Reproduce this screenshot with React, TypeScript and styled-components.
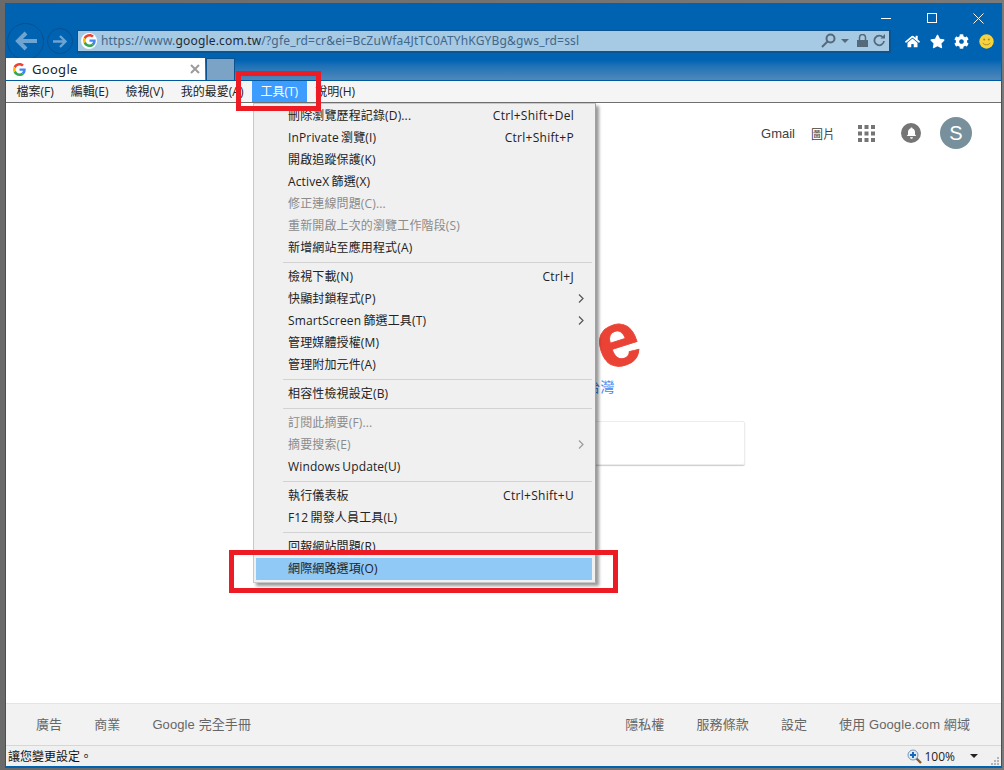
import React from "react";
import styled, { createGlobalStyle } from "styled-components";
import { FaHome, FaStar, FaCog } from "react-icons/fa";

const Global = createGlobalStyle`
  html, body { margin: 0; padding: 0; background: #6d6d6d; }
  body { font-family: "Open Sans", "Noto Sans CJK TC", sans-serif; }
  * { box-sizing: border-box; }
`;

const Screen = styled.div`
  width: 1004px;
  height: 770px;
  padding: 3px 2px 2px 5px;
  background: linear-gradient(90deg, #6a6a6a, #7a7a7a);
  overflow: hidden;
`;

const Window = styled.div`
  position: relative;
  width: 997px;
  height: 765px;
  border: 1px solid #0063b1;
  border-bottom-width: 2px;
  display: flex;
  flex-direction: column;
  background: #fff;
`;

const Chrome = styled.div`
  height: 77px;
  flex: none;
  display: flex;
  flex-direction: column;
  background: linear-gradient(180deg, #0063b1 0, #0063b1 56px, #1f72b6 62px, #4f88ba 76px);
  border-bottom: 1px solid #00599f;
`;

const Controls = styled.div`
  height: 19px;
  flex: none;
  display: flex;
  justify-content: flex-end;
  gap: 35px;
  padding: 9px 17px 0 0;
  color: #fff;
`;

const ControlIcon = styled.svg`
  width: 11px;
  height: 11px;
  display: block;
  stroke: #fff;
  stroke-width: 1;
  fill: none;
`;

const NavRow = styled.div`
  height: 36px;
  flex: none;
  display: flex;
  align-items: center;
  padding-left: 1px;
`;

const RoundButton = styled.div<{ $size: number; $mr: number }>`
  width: ${(p) => p.$size}px;
  height: ${(p) => p.$size}px;
  margin-right: ${(p) => p.$mr}px;
  flex: none;
  border-radius: 50%;
  border: 1px solid #0b4f8e;
  display: flex;
  align-items: center;
  justify-content: center;
`;

const AddressBar = styled.div`
  width: 814px;
  height: 23px;
  flex: none;
  display: flex;
  align-items: center;
  background: #a6cae4;
  border: 1px solid #0c5490;
  border-width: 1px 2px 2px 1px;
  padding: 0 4px 0 3px;
`;

const Favicon = styled.svg<{ $size: number }>`
  width: ${(p) => p.$size}px;
  height: ${(p) => p.$size}px;
  flex: none;
  display: block;
`;

const FaviconDisc = styled.span`
  width: 16px;
  height: 16px;
  border-radius: 50%;
  background: #fff;
  display: flex;
  align-items: center;
  justify-content: center;
  flex: none;
`;

const Url = styled.div`
  margin-left: 4px;
  flex: 1;
  font-family: "Noto Sans", sans-serif;
  font-size: 12px;
  white-space: nowrap;
  color: #41678a;
  letter-spacing: 0.175px;
`;

const UrlHost = styled.span`
  color: #1d2a36;
`;

const AddressIcons = styled.div`
  display: flex;
  align-items: center;
  gap: 5px;
  flex: none;
`;

const Actions = styled.div`
  display: flex;
  align-items: center;
  gap: 9.5px;
  margin-left: 14px;
  color: #fff;
  font-size: 15px;
`;

const TabRow = styled.div`
  flex: 1;
  display: flex;
  align-items: stretch;
  gap: 1px;
  margin-top: -1px;
`;

const Tab = styled.div`
  width: 199px;
  display: flex;
  align-items: center;
  padding: 0 5px 0 7px;
  background: #fff;
  font-size: 13px;
  font-family: "Noto Sans", sans-serif;
  color: #222;
  letter-spacing: 0.3px;
`;

const TabTitle = styled.span`
  margin-left: 6px;
  flex: 1;
`;

const TabClose = styled.svg`
  width: 10px;
  height: 10px;
  stroke: #9b9b9b;
  stroke-width: 2;
`;

const TabStub = styled.div`
  width: 29px;
  background: #7ba3c6;
  border: 1px solid #0d5390;
  border-bottom: none;
`;

const MenuBar = styled.div`
  height: 22px;
  flex: none;
  display: flex;
  align-items: center;
  padding-left: 2px;
  background: #f5f5f5;
  border-bottom: 1px solid #6f6f6f;
  font-size: 12px;
  color: #222;
`;

const MenuLabel = styled.div<{ $active?: boolean }>`
  height: 21px;
  display: flex;
  align-items: center;
  padding: 0 8.5px 1px;
  white-space: nowrap;
  background: ${(p) => (p.$active ? "#3d9cff" : "transparent")};
  color: ${(p) => (p.$active ? "#fff" : "#222")};
`;

const Page = styled.div`
  flex: 1;
  min-height: 0;
  display: flex;
  flex-direction: column;
  background: #fff;
`;

const TopLinks = styled.div`
  height: 60px;
  flex: none;
  display: flex;
  align-items: center;
  justify-content: flex-end;
  padding-right: 29px;
  color: #404040;
  font-size: 13px;
  font-family: "Liberation Sans", "Noto Sans CJK TC", sans-serif;
`;

const TopLink = styled.span<{ $mr: number; $size: number }>`
  margin-right: ${(p) => p.$mr}px;
  font-size: ${(p) => p.$size}px;
`;

const GridIcon = styled.svg`
  width: 17px;
  height: 17px;
  margin-right: 26px;
  fill: #757575;
`;

const Bell = styled.div`
  width: 20px;
  height: 20px;
  border-radius: 50%;
  margin-right: 19px;
  background: #757575;
  display: flex;
  align-items: center;
  justify-content: center;
`;

const Avatar = styled.div`
  width: 32px;
  height: 32px;
  border-radius: 50%;
  background: #78909c;
  color: #fff;
  font-size: 20px;
  display: flex;
  align-items: center;
  justify-content: center;
`;

const Center = styled.div`
  flex: 1;
  display: flex;
  flex-direction: column;
  align-items: center;
`;

const Brand = styled.div`
  margin-top: 139px;
  width: 282px;
  display: flex;
  flex-direction: column;
  align-items: flex-end;
`;

const Logo = styled.div`
  align-self: center;
  font-family: "Liberation Sans", sans-serif;
  font-weight: 700;
  font-size: 77px;
  line-height: 74px;
  white-space: nowrap;
  margin-left: 4px;
  -webkit-text-stroke: 0.8px currentColor;
`;

const LogoLetter = styled.span<{ $color: string; $tilt?: boolean }>`
  color: ${(p) => p.$color};
  display: inline-block;
  ${(p) => (p.$tilt ? "transform: rotate(-18deg);" : "")}
`;

const Region = styled.div`
  margin-right: 30px;
  font-size: 14px;
  line-height: 20px;
  color: #4285f4;
  font-family: "Noto Sans CJK TC", sans-serif;
`;

const SearchBox = styled.div`
  margin-top: 25px;
  width: 482px;
  height: 44px;
  border: 1px solid #ececec;
  border-radius: 2px;
  box-shadow: 0 1px 1px rgba(0, 0, 0, 0.2);
`;

const Footer = styled.div`
  height: 43px;
  flex: none;
  display: flex;
  align-items: center;
  justify-content: space-between;
  padding: 0 31px 2px 30px;
  background: #f2f2f2;
  border-top: 1px solid #e4e4e4;
  border-bottom: 1px solid #d6d6d6;
  color: #666;
  font-size: 13px;
  letter-spacing: 0.1px;
  font-family: "Liberation Sans", "Noto Sans CJK TC", sans-serif;
`;

const FooterGroup = styled.div`
  display: flex;
  gap: 32px;
`;

const StatusBar = styled.div`
  height: 20px;
  flex: none;
  display: flex;
  align-items: center;
  padding-left: 2px;
  background: #f0f0f0;
  color: #111;
  font-size: 12px;
`;

const StatusText = styled.span`
  flex: 1;
`;

const ZoomGroup = styled.div`
  display: flex;
  align-items: center;
  gap: 2px;
  color: #222;
`;

const Caret = styled.span`
  width: 0;
  height: 0;
  margin: 0 12px 0 15px;
  border-left: 4px solid transparent;
  border-right: 4px solid transparent;
  border-top: 4px solid #222;
`;

const Grip = styled.svg`
  width: 10px;
  height: 10px;
  margin: 8px 1px 0 0;
  fill: #b4b4b4;
  align-self: flex-end;
`;

const Dropdown = styled.div`
  position: absolute;
  left: 247px;
  top: 99px;
  width: 343px;
  padding: 1px 0 2px;
  background: #f0f0f0;
  border: 1px solid #c8c8c8;
  border-right-color: #a0a0a0;
  box-shadow: 3px 3px 3px rgba(0, 0, 0, 0.4);
  font-size: 12px;
  letter-spacing: 0.14px;
  word-spacing: -1px;
  color: #222;
  z-index: 2;
`;

const Item = styled.div<{ $disabled?: boolean; $selected?: boolean }>`
  height: 22px;
  display: flex;
  align-items: center;
  justify-content: space-between;
  white-space: nowrap;
  padding: 0 ${(p) => (p.$selected ? 18 : 21)}px 2px ${(p) => (p.$selected ? 32 : 34)}px;
  margin: 0 ${(p) => (p.$selected ? "3px 0 2px" : "0")};
  color: ${(p) => (p.$disabled ? "#8b8b8b" : "#222")};
  background: ${(p) => (p.$selected ? "#90c8f6" : "transparent")};
`;

const Shortcut = styled.span`
  letter-spacing: 0.28px;
`;

const Chevron = styled.svg<{ $disabled?: boolean }>`
  width: 6px;
  height: 9px;
  margin-right: -10px;
  fill: none;
  stroke: ${(p) => (p.$disabled ? "#9b9b9b" : "#555")};
  stroke-width: 1.2;
`;

const Separator = styled.div`
  height: 1px;
  margin: 3px 3px 3px 29px;
  background: #d2d2d2;
`;

const Callout = styled.div<{ $x: number; $y: number; $w: number; $h: number }>`
  position: absolute;
  left: ${(p) => p.$x}px;
  top: ${(p) => p.$y}px;
  width: ${(p) => p.$w}px;
  height: ${(p) => p.$h}px;
  border: 5px solid #ed1c24;
  z-index: 3;
`;

const GoogleG = ({ size }: { size: number }) => (
  <Favicon $size={size} viewBox="0 0 48 48">
    <path fill="#EA4335" d="M24 9.5c3.54 0 6.71 1.22 9.21 3.6l6.85-6.85C35.9 2.38 30.47 0 24 0 14.62 0 6.51 5.38 2.56 13.22l7.98 6.19C12.43 13.72 17.74 9.5 24 9.5z" />
    <path fill="#4285F4" d="M46.98 24.55c0-1.57-.15-3.09-.38-4.55H24v9.02h12.94c-.58 2.96-2.26 5.48-4.78 7.18l7.73 6c4.51-4.18 7.09-10.36 7.09-17.65z" />
    <path fill="#FBBC05" d="M10.53 28.59c-.48-1.45-.76-2.99-.76-4.59s.27-3.14.76-4.59l-7.98-6.19C.92 16.46 0 20.12 0 24c0 3.88.92 7.54 2.56 10.78l7.97-6.19z" />
    <path fill="#34A853" d="M24 48c6.48 0 11.93-2.13 15.89-5.81l-7.73-6c-2.15 1.45-4.92 2.3-8.16 2.3-6.26 0-11.57-4.22-13.47-9.91l-7.98 6.19C6.51 42.62 14.62 48 24 48z" />
  </Favicon>
);

type Entry = { label?: string; shortcut?: string; disabled?: boolean; submenu?: boolean; selected?: boolean; sep?: boolean };

const entries: Entry[] = [
  { label: "刪除瀏覽歷程記錄(D)...", shortcut: "Ctrl+Shift+Del" },
  { label: "InPrivate 瀏覽(I)", shortcut: "Ctrl+Shift+P" },
  { label: "開啟追蹤保護(K)" },
  { label: "ActiveX 篩選(X)" },
  { label: "修正連線問題(C)...", disabled: true },
  { label: "重新開啟上次的瀏覽工作階段(S)", disabled: true },
  { label: "新增網站至應用程式(A)" },
  { sep: true },
  { label: "檢視下載(N)", shortcut: "Ctrl+J" },
  { label: "快顯封鎖程式(P)", submenu: true },
  { label: "SmartScreen 篩選工具(T)", submenu: true },
  { label: "管理媒體授權(M)" },
  { label: "管理附加元件(A)" },
  { sep: true },
  { label: "相容性檢視設定(B)" },
  { sep: true },
  { label: "訂閱此摘要(F)...", disabled: true },
  { label: "摘要搜索(E)", disabled: true, submenu: true },
  { label: "Windows Update(U)" },
  { sep: true },
  { label: "執行儀表板", shortcut: "Ctrl+Shift+U" },
  { label: "F12 開發人員工具(L)" },
  { sep: true },
  { label: "回報網站問題(R)" },
  { label: "網際網路選項(O)", selected: true },
];

const menus = ["檔案(F)", "編輯(E)", "檢視(V)", "我的最愛(A)"];

export default function App() {
  return (
    <>
      <Global />
      <Screen>
        <Window>
          <Chrome>
            <Controls>
              <ControlIcon viewBox="0 0 11 11"><path d="M0 5.5h10" /></ControlIcon>
              <ControlIcon viewBox="0 0 11 11"><rect x="0.5" y="0.5" width="9" height="9" /></ControlIcon>
              <ControlIcon viewBox="0 0 11 11"><path d="M0.5 0.5l10 10M10.5 0.5l-10 10" /></ControlIcon>
            </Controls>
            <NavRow>
              <RoundButton $size={37} $mr={3}>
                <svg width="24" height="20" viewBox="0 0 24 20" fill="none" stroke="#6fa3d0" strokeWidth="4">
                  <path d="M23 10H4M12 2l-8 8 8 8" />
                </svg>
              </RoundButton>
              <RoundButton $size={26} $mr={4}>
                <svg width="15" height="13" viewBox="0 0 15 13" fill="none" stroke="#6fa3d0" strokeWidth="2.4">
                  <path d="M0 6.5h12M7 1l5.5 5.5L7 12" />
                </svg>
              </RoundButton>
              <AddressBar>
                <FaviconDisc><GoogleG size={13} /></FaviconDisc>
                <Url>
                  https://www.<UrlHost>google.com.tw</UrlHost>/?gfe_rd=cr&ei=BcZuWfa4JtTC0ATYhKGYBg&gws_rd=ssl
                </Url>
                <AddressIcons>
                  <svg width="15" height="15" viewBox="0 0 15 15" fill="none" stroke="#56697a" strokeWidth="2">
                    <circle cx="9.5" cy="5.5" r="4" />
                    <path d="M6.5 8.5L1 14" />
                  </svg>
                  <svg width="8" height="4" viewBox="0 0 8 4" fill="#56697a"><path d="M0 0h8L4 4z" /></svg>
                  <svg width="11" height="13" viewBox="0 0 11 13" fill="#56697a" style={{ marginLeft: 3 }}>
                    <path d="M0 6h11v7H0z" />
                    <path d="M2.5 6V3.5a3 3 0 0 1 6 0V6" fill="none" stroke="#56697a" strokeWidth="1.5" />
                  </svg>
                  <svg width="12" height="13" viewBox="0 0 12 13" fill="none" stroke="#56697a" strokeWidth="1.8">
                    <path d="M10 3.5A4.8 4.8 0 1 0 11 7" />
                    <path d="M7.5 4.5H12V0z" fill="#56697a" stroke="none" />
                  </svg>
                </AddressIcons>
              </AddressBar>
              <Actions>
                <FaHome size={15} />
                <FaStar size={15} />
                <FaCog size={15} />
                <svg width="15" height="15" viewBox="0 0 15 15">
                  <circle cx="7.5" cy="7.5" r="7.2" fill="#f6d33c" />
                  <circle cx="5.2" cy="5.5" r="1" fill="#a8862a" />
                  <circle cx="9.8" cy="5.5" r="1" fill="#a8862a" />
                  <path d="M3.8 8.8c1 2.6 6.4 2.6 7.4 0" fill="none" stroke="#a8862a" strokeWidth="1" />
                </svg>
              </Actions>
            </NavRow>
            <TabRow>
              <Tab>
                <GoogleG size={13} />
                <TabTitle>Google</TabTitle>
                <TabClose viewBox="0 0 10 10"><path d="M1 1l8 8M9 1l-8 8" /></TabClose>
              </Tab>
              <TabStub />
            </TabRow>
          </Chrome>
          <MenuBar>
            {menus.map((m) => (
              <MenuLabel key={m}>{m}</MenuLabel>
            ))}
            <MenuLabel $active>工具(T)</MenuLabel>
            <MenuLabel>說明(H)</MenuLabel>
          </MenuBar>
          <Page>
            <TopLinks>
              <TopLink $mr={16} $size={13}>Gmail</TopLink>
              <TopLink $mr={23} $size={12}>圖片</TopLink>
              <GridIcon viewBox="0 0 17 17">
                {[0, 6.5, 13].map((x) =>
                  [0, 6.5, 13].map((y) => <rect key={`${x}-${y}`} x={x} y={y} width="4" height="4" />)
                )}
              </GridIcon>
              <Bell>
                <svg width="11" height="12" viewBox="0 0 11 12" fill="#fff">
                  <path d="M5.5 0.5c.6 0 1 .4 1 1 1.8.5 2.5 2 2.5 3.5v2.5l1.3 1.5H.7L2 7.5V5c0-1.500.7-3 2.500-3.500 0-.6.4-1 1-1z" />
                  <path d="M4 10.200h3c0 .9-.6 1.500-1.500 1.500S4 11.100 4 10.200z" />
                </svg>
              </Bell>
              <Avatar>S</Avatar>
            </TopLinks>
            <Center>
              <Brand>
                <Logo>
                  <LogoLetter $color="#4285f4">G</LogoLetter>
                  <LogoLetter $color="#ea4335">o</LogoLetter>
                  <LogoLetter $color="#fbbc05">o</LogoLetter>
                  <LogoLetter $color="#4285f4">g</LogoLetter>
                  <LogoLetter $color="#34a853">l</LogoLetter>
                  <LogoLetter $color="#ea4335" $tilt>e</LogoLetter>
                </Logo>
                <Region>台灣</Region>
              </Brand>
              <SearchBox />
            </Center>
            <Footer>
              <FooterGroup>
                <span>廣告</span>
                <span>商業</span>
                <span>Google 完全手冊</span>
              </FooterGroup>
              <FooterGroup>
                <span>隱私權</span>
                <span>服務條款</span>
                <span>設定</span>
                <span>使用 Google.com 網域</span>
              </FooterGroup>
            </Footer>
            <StatusBar>
              <StatusText>讓您變更設定。</StatusText>
              <ZoomGroup>
                <svg width="15" height="15" viewBox="0 0 15 15">
                  <path d="M9 9l5 5" stroke="#8a5a2b" strokeWidth="2.4" />
                  <circle cx="6" cy="6" r="5" fill="#dcebf7" stroke="#7a97b2" />
                  <path d="M3 6h6M6 3v6" stroke="#1668b8" strokeWidth="2" />
                </svg>
                100%
              </ZoomGroup>
              <Caret />
              <Grip viewBox="0 0 10 10">
                <rect x="7" y="1" width="2" height="2" />
                <rect x="4" y="4" width="2" height="2" />
                <rect x="7" y="4" width="2" height="2" />
                <rect x="1" y="7" width="2" height="2" />
                <rect x="4" y="7" width="2" height="2" />
                <rect x="7" y="7" width="2" height="2" />
              </Grip>
            </StatusBar>
          </Page>
          <Dropdown>
            {entries.map((e, i) =>
              e.sep ? (
                <Separator key={i} />
              ) : (
                <Item key={i} $disabled={e.disabled} $selected={e.selected}>
                  <span>{e.label}</span>
                  {e.shortcut && <Shortcut>{e.shortcut}</Shortcut>}
                  {e.submenu && (
                    <Chevron $disabled={e.disabled} viewBox="0 0 6 9">
                      <path d="M1 0.500l4 4-4 4" />
                    </Chevron>
                  )}
                </Item>
              )
            )}
          </Dropdown>
          <Callout $x={230} $y={67} $w={85} $h={40} />
          <Callout $x={223} $y={546} $w={389} $h={43} />
        </Window>
      </Screen>
    </>
  );
}
